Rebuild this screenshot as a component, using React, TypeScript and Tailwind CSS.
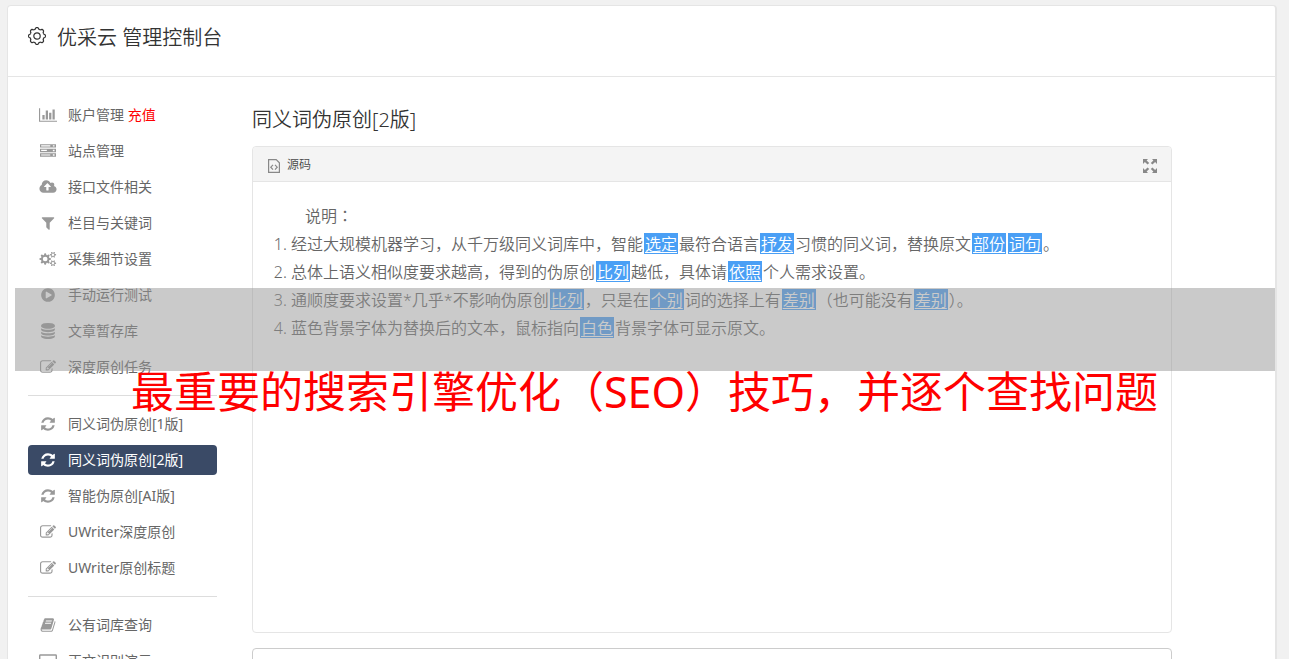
import type { ReactNode } from "react";

const glyphs = {
  chart: {
    box: "0 0 2048 1792",
    d: "M640 896v512h-256v-512h256zM1024 384v1024h-256v-1024h256zM2048 1536v128h-2048v-1536h128v1408h1920zM1408 640v768h-256v-768h256zM1792 256v1152h-256v-1152h256z",
  },
  server: {
    box: "0 0 1792 1792",
    d: "M0 128h1792v384h-1792zM128 256v128h1024v-128zM1440 240v160h192v-160zM0 640h1792v384h-1792zM128 768v128h640v-128zM1440 752v160h192v-160zM0 1152h1792v384h-1792zM128 1280v128h1024v-128zM1440 1264v160h192v-160z",
  },
  cloud: {
    box: "-64 0 1920 1792",
    d: "M1216 864q0-14-9-23l-352-352q-9-9-23-9t-23 9l-351 351q-10 12-10 24 0 14 9 23t23 9h224v352q0 13 9.5 22.5t22.5 9.5h192q13 0 22.5-9.5t9.5-22.5v-352h224q13 0 22.5-9.5t9.5-22.5zm640 288q0 159-112.5 271.5t-271.5 112.5h-1088q-185 0-316.5-131.5t-131.5-316.5q0-130 70-240t188-165q-2-30-2-43 0-212 150-362t362-150q156 0 285.5 87t188.5 231q71-62 166-62 106 0 181 75t75 181q0 76-41 138 130 31 213.5 135.5t83.5 238.5z",
  },
  filter: {
    box: "0 0 1792 1792",
    d: "M1595 295q17 41-14 70l-493 493v742q0 42-39 59-13 5-25 5-27 0-45-19l-256-256q-19-19-19-45v-486l-493-493q-31-29-14-70 17-39 59-39h1280q42 0 59 39z",
  },
  play: {
    box: "0 0 1792 1792",
    d: "M896 128q209 0 385.5 103t279.5 279.5 103 385.5-103 385.5-279.5 279.5-385.5 103-385.5-103-279.5-279.5-103-385.5 103-385.5 279.5-279.5 385.5-103zm384 823q32-18 32-55t-32-55l-544-320q-31-19-64-1-32 19-32 56v640q0 37 32 56 16 8 32 8 17 0 32-9z",
  },
  database: {
    box: "0 0 1792 1792",
    d: "M896 768q237 0 443-43t325-127v170q0 69-103 128t-280 93.5-385 34.5-385-34.5-280-93.5-103-128v-170q119 84 325 127t443 43zm0 768q237 0 443-43t325-127v170q0 69-103 128t-280 93.5-385 34.5-385-34.5-280-93.5-103-128v-170q119 84 325 127t443 43zm0-384q237 0 443-43t325-127v170q0 69-103 128t-280 93.5-385 34.5-385-34.5-280-93.5-103-128v-170q119 84 325 127t443 43zm0-1152q208 0 385 34.5t280 93.5 103 128v128q0 69-103 128t-280 93.5-385 34.5-385-34.5-280-93.5-103-128v-128q0-69 103-128t280-93.5 385-34.5z",
  },
  edit: {
    box: "0 0 1792 1792",
    d: "M888 1184l116-116-152-152-116 116v56h96v96h56zm440-720q-16-16-33 1l-350 350q-17 17-1 33t33-1l350-350q17-17 1-33zm80 594v190q0 119-84.5 203.5t-203.5 84.5h-832q-119 0-203.5-84.5t-84.5-203.5v-832q0-119 84.5-203.5t203.5-84.5h832q63 0 117 25 15 7 18 23 3 17-9 29l-49 49q-14 14-32 8-23-6-45-6h-832q-66 0-113 47t-47 113v832q0 66 47 113t113 47h832q66 0 113-47t47-113v-126q0-13 9-22l64-64q15-15 35-7t20 29zm-96-738l288 288-672 672h-288v-288zm444 132l-92 92-288-288 92-92q28-28 68-28t68 28l152 152q28 28 28 68t-28 68z",
  },
  refresh: {
    box: "0 0 1792 1792",
    d: "M1639 1056q0 5-1 7-64 268-268 434.5t-478 166.5q-146 0-282.5-55t-243.5-157l-129 129q-19 19-45 19t-45-19-19-45v-448q0-26 19-45t45-19h448q26 0 45 19t19 45-19 45l-137 137q71 66 161 102t187 36q134 0 250-65t186-179q11-17 53-117 8-23 30-23h192q13 0 22.5 9.5t9.5 22.5zm25-800v448q0 26-19 45t-45 19h-448q-26 0-45-19t-19-45 19-45l138-138q-148-137-349-137-134 0-250 65t-186 179q-11 17-53 117-8 23-30 23h-199q-13 0-22.5-9.5t-9.5-22.5v-7q65-268 270-434.5t480-166.5q146 0 284 55.5t245 156.5l130-129q19-19 45-19t45 19 19 45z",
  },
  book: {
    box: "0 0 1792 1792",
    d: "M1703 478q40 57 18 129l-275 906q-19 64-76.5 107.5t-122.5 43.5h-923q-77 0-148.5-53.5t-99.5-131.5q-24-67-2-127 0-4 3-27t4-37q1-8-3-21.5t-3-19.5q2-11 8-21t16.5-23.5 16.5-23.5q23-38 45-91.5t30-91.5q3-10 .5-30t-.5-28q3-11 17-28t17-23q21-36 42-92t25-90q1-9-2.5-32t.5-28q4-13 22-30.5t22-22.5q19-26 42.5-84.5t27.5-96.5q1-8-3-25.5t-2-26.5q2-8 9-18t18-23 17-21q8-12 16.5-30.5t15-35 16-36 19.5-32 26.5-23.5 36-11.5 47.5 5.5l-1 3q38-9 51-9h761q74 0 114 56t18 130l-274 906q-36 119-71.5 153.5t-128.5 34.5h-869q-27 0-38 15-11 16-1 43 24 70 144 70h923q29 0 56-15.5t35-41.5l300-987q7-22 5-57 38 15 59 43zm-1064 2q-4 13 2 22.5t20 9.5h608q13 0 25.5-9.5t16.5-22.5l21-64q4-13-2-22.5t-20-9.5h-608q-13 0-25.5 9.5t-16.5 22.5zm-83 256q-4 13 2 22.5t20 9.5h608q13 0 25.5-9.5t16.5-22.5l21-64q4-13-2-22.5t-20-9.5h-608q-13 0-25.5 9.5t-16.5 22.5z",
  },
  screen: {
    box: "0 0 2048 1792",
    d: "M160 128h1728q160 0 160 160v1088q0 160-160 160h-1728q-160 0-160-160v-1088q0-160 160-160zM160 288v1088h1728v-1088z",
  },
};

type IconName = keyof typeof glyphs | "cogs";

// Closed cog outline with the given number of teeth, sampled around its centre.
function cog(cx: number, cy: number, mean: number, depth: number, teeth: number) {
  const points = Array.from({ length: 160 }, (_, i) => {
    const angle = (i / 160) * Math.PI * 2;
    const radius = mean + depth * Math.tanh(1.8 * Math.cos(angle * teeth));
    return `${(cx + radius * Math.cos(angle)).toFixed(2)} ${(cy + radius * Math.sin(angle)).toFixed(2)}`;
  });
  return `M${points.join("L")}Z`;
}

function hole(cx: number, cy: number, r: number) {
  return `M${cx - r} ${cy}a${r} ${r} 0 1 0 ${2 * r} 0a${r} ${r} 0 1 0 ${-2 * r} 0Z`;
}

const headerCog = cog(9, 9, 7.7, 0.8, 8);
const threeCogs =
  cog(6, 8.5, 5.3, 0.9, 8) +
  hole(6, 8.5, 2.5) +
  cog(14.3, 4, 2.7, 0.7, 6) +
  hole(14.3, 4, 1.3) +
  cog(14.3, 13, 2.7, 0.7, 6) +
  hole(14.3, 13, 1.3);

function Glyph({ name }: { name: IconName }) {
  const { box, d } = name === "cogs" ? { box: "0 0 18 17", d: threeCogs } : glyphs[name];
  return (
    <svg viewBox={box} className="h-4 w-[18px]" fill="currentColor" fillRule="evenodd" aria-hidden="true">
      <path d={d} />
    </svg>
  );
}

type Item = { icon: IconName; label: string; note?: string; active?: boolean };

const groups: Item[][] = [
  [
    { icon: "chart", label: "账户管理", note: "充值" },
    { icon: "server", label: "站点管理" },
    { icon: "cloud", label: "接口文件相关" },
    { icon: "filter", label: "栏目与关键词" },
    { icon: "cogs", label: "采集细节设置" },
    { icon: "play", label: "手动运行测试" },
    { icon: "database", label: "文章暂存库" },
    { icon: "edit", label: "深度原创任务" },
  ],
  [
    { icon: "refresh", label: "同义词伪原创[1版]" },
    { icon: "refresh", label: "同义词伪原创[2版]", active: true },
    { icon: "refresh", label: "智能伪原创[AI版]" },
    { icon: "edit", label: "UWriter深度原创" },
    { icon: "edit", label: "UWriter原创标题" },
  ],
  [
    { icon: "book", label: "公有词库查询" },
    { icon: "screen", label: "正文识别演示" },
  ],
];

function NavItem({ icon, label, note, active }: Item) {
  return (
    <li>
      <a
        href="#"
        aria-current={active ? "page" : undefined}
        className={
          active
            ? "flex h-[30px] items-center gap-[11px] rounded bg-[#3a4a66] pl-[11px] text-white"
            : "flex h-[30px] items-center gap-[11px] rounded pl-[11px] text-[#666]"
        }
      >
        <span className={active ? "text-white" : "text-[#999]"}>
          <Glyph name={icon} />
        </span>
        <span className="whitespace-nowrap">
          {label}
          {note && <span className="text-[#f00]"> {note}</span>}
        </span>
      </a>
    </li>
  );
}

function Swap({ children }: { children: ReactNode }) {
  return (
    <span className="mx-px mt-[3px] inline-block h-[21px] bg-[#4a9ff5] px-px align-top leading-[23px] text-white underline underline-offset-2">
      {children}
    </span>
  );
}

export default function App() {
  return (
    <div
      lang="zh-CN"
      className="relative h-screen overflow-hidden bg-[#f1f1f1] pt-[5px] pr-3 pl-[7px] font-['Noto_Sans','Noto_Sans_CJK_SC',sans-serif] text-sm font-[350] text-[#666]"
    >
      <div className="rounded border border-r-2 border-[#e5e5e5] bg-white">
        <header className="flex h-[71px] items-start gap-[11px] border-b border-[#e5e5e5] pt-[17px] pl-5 text-[#333]">
          <svg viewBox="0 0 18 18" className="mt-1 size-[18px]" fill="none" stroke="currentColor" strokeWidth="1.2" aria-hidden="true">
            <path d={headerCog} />
            <circle cx="9" cy="9" r="3.2" />
          </svg>
          <h1 className="text-xl leading-[30px]">优采云 管理控制台</h1>
        </header>

        <div className="flex gap-[35px] pl-5">
          <nav aria-label="管理菜单" className="w-[189px] shrink-0 pt-[23px] font-normal">
            {groups.map((items, index) => (
              <ul
                key={items[0].label}
                className={index === 0 ? "flex flex-col gap-1.5" : "mt-[13px] flex flex-col gap-1.5 border-t border-[#ddd] pt-[13px]"}
              >
                {items.map((item) => (
                  <NavItem key={item.label} {...item} />
                ))}
              </ul>
            ))}
          </nav>

          <main className="mr-[103px] min-w-0 flex-1 pt-7">
            <h2 className="text-xl leading-[30px] text-[#333]">同义词伪原创[2版]</h2>

            <section aria-label="编辑器" className="mt-[11px] rounded border border-[#e5e5e5]">
              <div className="flex h-[35px] items-center justify-between rounded-t border-b border-[#e5e5e5] bg-[#f4f4f4] pr-[14px] pl-[15px]">
                <button type="button" className="flex items-center gap-[7px] pt-0.5 text-xs text-[#484848]">
                  <svg viewBox="0 0 12 14" className="mt-0.5 h-[14px] w-3" fill="none" stroke="#888" aria-hidden="true">
                    <path d="M.6 .6h7.6l3.2 3.2v9.6H.6z" strokeWidth="1.2" />
                    <path d="M5 5.8L2.8 8.2L5 10.6M7 5.8l2.2 2.4L7 10.6" strokeWidth="1.2" />
                  </svg>
                  源码
                </button>
                <button type="button" aria-label="最大化" className="mt-1">
                  <svg viewBox="0 0 14 14" className="size-[14px]" fill="#888" aria-hidden="true">
                    <path d="M0 0h5L3.6 1.4 6.2 4 4.6 5.6 1.9 3 0 5zM14 0v5l-1.9-2-2.7 2.6L7.8 4l2.6-2.6L9 0zM0 14V9l1.9 2 2.7-2.6L6.2 10l-2.6 2.6L5 14zM14 14H9l1.4-1.4L7.8 10l1.6-1.6 2.7 2.6L14 9z" />
                  </svg>
                </button>
              </div>
              <div className="h-[450px] px-5 pt-5 text-base leading-7">
                <p className="indent-8">
                  说明
                  <span lang="zh-TW" className="font-['Noto_Sans_CJK_TC',sans-serif] leading-none">
                    ：
                  </span>
                </p>
                <ol className="list-decimal pl-[18px]">
                  <li>
                    经过大规模机器学习，从千万级同义词库中，智能<Swap>选定</Swap>最符合语言<Swap>抒发</Swap>习惯的同义词，替换原文<Swap>部份</Swap><Swap>词句</Swap>。
                  </li>
                  <li>
                    总体上语义相似度要求越高，得到的伪原创<Swap>比列</Swap>越低，具体请<Swap>依照</Swap>个人需求设置。
                  </li>
                  <li>
                    通顺度要求设置*几乎*不影响伪原创<Swap>比列</Swap>，只是在<Swap>个别</Swap>词的选择上有<Swap>差别</Swap>（也可能没有<Swap>差别</Swap>）。
                  </li>
                  <li>
                    蓝色背景字体为替换后的文本，鼠标指向<Swap>白色</Swap>背景字体可显示原文。
                  </li>
                </ol>
              </div>
            </section>

            <textarea aria-label="原文" className="mt-[15px] block h-40 w-full resize-none rounded border border-[#ccc] p-3" />
          </main>
        </div>
      </div>

      <div className="absolute top-[288px] right-[14px] left-[15px] h-[83px] bg-[#969696]/50" />
      <p className="absolute top-[360px] right-0 left-0 text-center text-[43px] leading-[64px] font-normal whitespace-nowrap text-[#f00]">
        最重要的搜索引擎优化（SEO）技巧，并逐个查找问题
      </p>
    </div>
  );
}
